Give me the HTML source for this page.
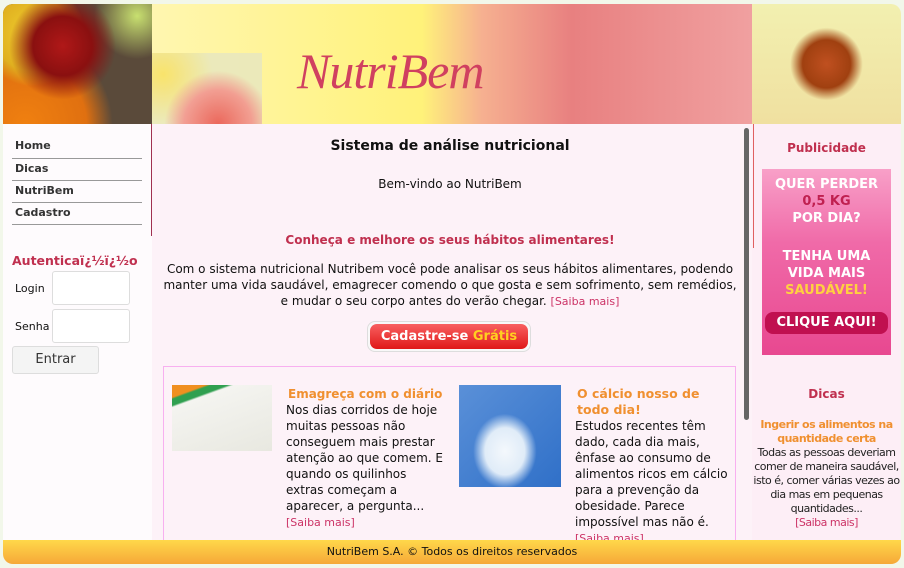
<!DOCTYPE html>
<html><head><meta charset="utf-8"><style>
*{margin:0;padding:0;box-sizing:border-box}
body{width:904px;height:568px;background:#f2f7ea;font-family:"DejaVu Sans","Liberation Sans",sans-serif;position:relative;overflow:hidden;color:#111}
.a{position:absolute}
#wrap{left:3px;top:4px;width:898px;height:560px;border-radius:10px;overflow:hidden;background:#fdf2f8}
.lnk{color:#cc3366}
</style></head><body>
<div id="wrap" class="a">
 <div class="a" style="left:0;top:0;width:149px;height:120px;background:radial-gradient(circle at 40% 35%,#b01818 0,#8a1010 25%,transparent 45%),radial-gradient(circle at 20% 25%,#f0d030 0,#e0b020 25%,transparent 35%),radial-gradient(circle at 15% 100%,#f08010 0,#e07010 35%,transparent 50%),radial-gradient(circle at 90% 10%,#c8e070 0,transparent 25%),#5a4a3a"></div>
 <div class="a" style="left:149px;top:0;width:600px;height:120px;background:linear-gradient(90deg,#fff6b0 0,#fff27a 45%,#f6b090 55%,#e88080 70%,#f0a0a0 100%)"></div>
 <div class="a" style="left:149px;top:49px;width:110px;height:71px;background:radial-gradient(circle at 60% 100%,#e85050 0,#f09090 35%,transparent 55%),radial-gradient(circle at 10% 30%,#f8e060 0,transparent 45%),#e8e8c0;opacity:.85"></div>
 <div class="a" style="left:294px;top:38px;font-family:'Liberation Serif',serif;font-style:italic;font-size:50px;color:#d04060;letter-spacing:-1px">NutriBem</div>
 <div class="a" style="left:749px;top:0;width:149px;height:120px;background:radial-gradient(circle at 50% 50%,#c05020 0,#a04010 25%,transparent 38%),linear-gradient(#f2f0b0,#f0e0a0)"></div>
 <div class="a" style="left:0;top:120px;width:149px;height:420px;background:#fefbfd"></div>
 <div class="a" style="left:148px;top:120px;width:1px;height:112px;background:#a03050"></div>
 <div class="a" style="left:9px;top:133px;width:130px;font-weight:bold;font-size:11px;color:#333">
  <div style="height:22px;border-bottom:1px solid #999;padding:2px 0 0 3px">Home</div>
  <div style="height:22px;border-bottom:1px solid #999;padding:3px 0 0 3px">Dicas</div>
  <div style="height:22px;border-bottom:1px solid #999;padding:3px 0 0 3px">NutriBem</div>
  <div style="height:22px;border-bottom:1px solid #999;padding:3px 0 0 3px">Cadastro</div>
 </div>
 <div class="a" style="left:9px;top:249px;font-weight:bold;font-size:12.5px;color:#c0304f">Autenticaï¿½ï¿½o</div>
 <div class="a" style="left:12px;top:278px;font-size:11px">Login</div>
 <div class="a" style="left:49px;top:267px;width:78px;height:34px;border:1px solid #ddd;border-radius:3px;background:#fff"></div>
 <div class="a" style="left:12px;top:316px;font-size:11px">Senha</div>
 <div class="a" style="left:49px;top:305px;width:78px;height:34px;border:1px solid #ddd;border-radius:3px;background:#fff"></div>
 <div class="a" style="left:9px;top:342px;width:87px;height:28px;border:1px solid #ddd;border-radius:3px;background:#f4f4f4;font-size:13px;text-align:center;line-height:26px;color:#333">Entrar</div>
 <div class="a" style="left:149px;top:134px;width:596px;text-align:center;font-weight:bold;font-size:14px">Sistema de análise nutricional</div>
 <div class="a" style="left:149px;top:173px;width:596px;text-align:center;font-size:12px">Bem-vindo ao NutriBem</div>
 <div class="a" style="left:149px;top:229px;width:596px;text-align:center;font-weight:bold;font-size:12px;color:#c0304f">Conheça e melhore os seus hábitos alimentares!</div>
 <div class="a" style="left:155px;top:257px;width:584px;text-align:center;font-size:12px;line-height:16px">Com o sistema nutricional Nutribem você pode analisar os seus hábitos alimentares, podendo manter uma vida saudável, emagrecer comendo o que gosta e sem sofrimento, sem remédios, e mudar o seu corpo antes do verão chegar. <span class="lnk" style="font-size:11px">[Saiba mais]</span></div>
 <div class="a" style="left:364px;top:317px;width:164px;height:31px;border:1px solid #ddd;border-radius:8px;background:#f8f8f8"></div>
 <div class="a" style="left:367px;top:320px;width:158px;height:25px;border-radius:7px;background:linear-gradient(#f86060,#e01818);color:#fff;font-weight:bold;font-size:13px;text-align:center;line-height:25px">Cadastre-se <span style="color:#ffd020">Grátis</span></div>
 <div class="a" style="left:160px;top:362px;width:573px;height:200px;border:1px solid #f8b0f0"></div>
 <div class="a" style="left:169px;top:381px;width:100px;height:66px;background:linear-gradient(160deg,#f09020 0,#f09020 12%,#30a050 14%,#30a050 20%,#f4f4f0 22%,#e8e8e0 100%)"></div>
 <div class="a" style="left:283px;top:382px;width:161px;font-size:12px;line-height:16px"><b style="color:#f09030;padding-left:2px;white-space:nowrap">Emagreça com o diário</b><br>Nos dias corridos de hoje muitas pessoas não conseguem mais prestar atenção ao que comem. E quando os quilinhos extras começam a aparecer, a pergunta...<br><span class="lnk" style="font-size:11px">[Saiba mais]</span></div>
 <div class="a" style="left:456px;top:381px;width:102px;height:102px;background:radial-gradient(ellipse at 45% 65%,#f4f8fc 0,#e0ecf8 25%,transparent 40%),linear-gradient(135deg,#5a90d8,#3070c8)"></div>
 <div class="a" style="left:572px;top:382px;width:158px;font-size:12px;line-height:16px"><b style="color:#f09030;font-size:12.5px;display:block;width:130px;padding-left:2px">O cálcio nosso de todo dia!</b>Estudos recentes têm dado, cada dia mais, ênfase ao consumo de alimentos ricos em cálcio para a prevenção da obesidade. Parece impossível mas não é.<br><span class="lnk" style="font-size:11px">[Saiba mais]</span></div>
 <div class="a" style="left:741px;top:124px;width:5px;height:292px;border-radius:3px;background:#666"></div>
 <div class="a" style="left:749px;top:120px;width:149px;height:420px;background:#fdeef6"></div>
 <div class="a" style="left:750px;top:120px;width:1px;height:124px;background:#e06060"></div>
 <div class="a" style="left:749px;top:137px;width:149px;text-align:center;font-weight:bold;font-size:12px;color:#c0304f">Publicidade</div>
 <div class="a" style="left:759px;top:165px;width:129px;height:186px;background:linear-gradient(#f8a0c8,#f06aa8 40%,#e84890 100%);text-align:center;font-weight:bold;font-size:13px;line-height:17px;color:#fff;padding-top:7px">QUER PERDER<br><span style="color:#c02050">0,5 KG</span><br>POR DIA?<br><div style="height:21px"></div>TENHA UMA<br>VIDA MAIS<br><span style="color:#ffd040">SAUDÁVEL!</span><div style="margin:13px 3px 0;background:#c01050;border-radius:8px;height:22px;line-height:22px">CLIQUE AQUI!</div></div>
 <div class="a" style="left:749px;top:383px;width:149px;text-align:center;font-weight:bold;font-size:12px;color:#c0304f">Dicas</div>
 <div class="a" style="left:749px;top:414px;width:149px;text-align:center;font-size:11px;line-height:14px;color:#222;letter-spacing:-0.5px"><b style="color:#f09030">Ingerir os alimentos na quantidade certa</b><br>Todas as pessoas deveriam comer de maneira saudável, isto é, comer várias vezes ao dia mas em pequenas quantidades...<br><span class="lnk">[Saiba mais]</span></div>
 <div class="a" style="left:0;top:536px;width:898px;height:24px;background:linear-gradient(#ffd84a,#f6a838);text-align:center;font-size:11px;line-height:24px;color:#111">NutriBem S.A. © Todos os direitos reservados</div>
</div>
</body></html>
